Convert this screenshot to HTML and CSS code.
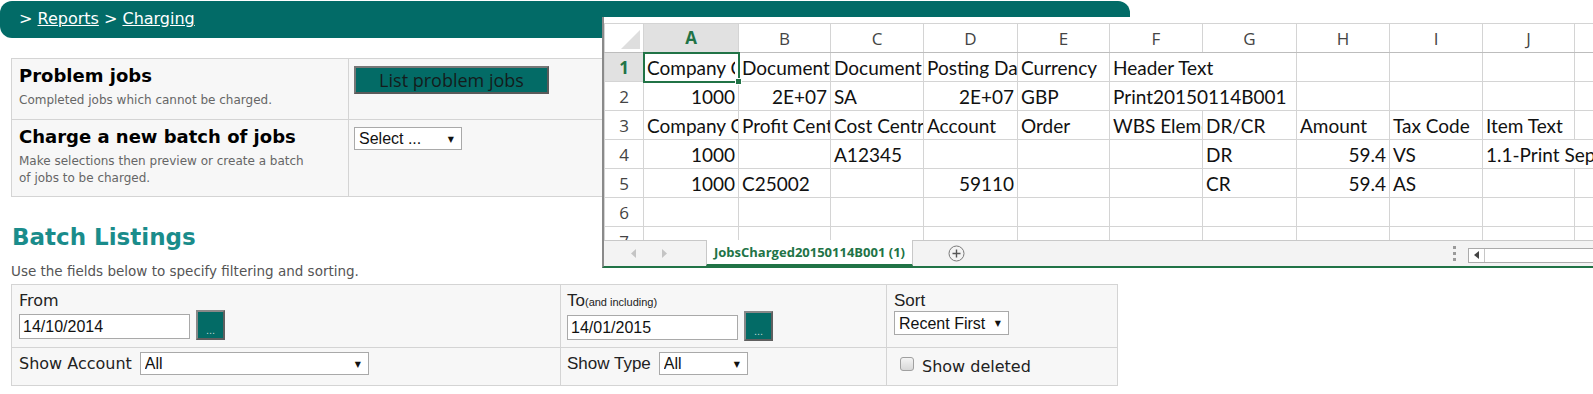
FILE: index.html
```html
<!DOCTYPE html>
<html lang="en">
<head>
    <meta charset="UTF-8">
    <meta name="viewport" content="width=device-width, initial-scale=1.0">
    <title>Reports - Charging</title>
    <link rel="stylesheet" href="styles.css">
</head>
<body>

    <div class="crumbs">&gt; <a href="#">Reports</a> &gt; <a href="#">Charging</a></div>

    <div class="page">
        <table class="actions">
            <tr class="r1">
                <td class="desc">
                    <div class="ttl">Problem jobs</div>
                    <div class="sub">Completed jobs which cannot be charged.</div>
                </td>
                <td class="ctl"><button class="bigbtn">List problem jobs</button></td>
            </tr>
            <tr class="r2">
                <td class="desc">
                    <div class="ttl">Charge a new batch of jobs</div>
                    <div class="sub">Make selections then preview or create a batch<br>of jobs to be charged.</div>
                </td>
                <td class="ctl">
                    <span class="dd"><select class="sel-batch"><option>Select ...</option></select></span>
                </td>
            </tr>
        </table>

        <h2 class="head">Batch Listings</h2>
        <p class="hint">Use the fields below to specify filtering and sorting.</p>

        <table class="filters">
            <tr class="f1">
                <td class="c1">
                    <div class="lbl">From</div>
                    <div class="datebox">
                        <input class="date" type="text" value="14/10/2014">
                        <button class="pick">...</button>
                    </div>
                </td>
                <td class="c2">
                    <div class="lbl arial">To<small>(and including)</small></div>
                    <div class="datebox">
                        <input class="date" type="text" value="14/01/2015">
                        <button class="pick">...</button>
                    </div>
                </td>
                <td class="c3">
                    <div class="lbl arial">Sort</div>
                    <span class="dd"><select class="sel-sort"><option>Recent First</option></select></span>
                </td>
            </tr>
            <tr class="f2">
                <td class="c1">
                    <div class="inline">
                        <span class="lbl">Show Account</span>
                        <span class="dd"><select class="sel-acc"><option>All</option></select></span>
                    </div>
                </td>
                <td class="c2">
                    <div class="inline">
                        <span class="lbl arial">Show Type</span>
                        <span class="dd"><select class="sel-type"><option>All</option></select></span>
                    </div>
                </td>
                <td class="c3">
                    <label class="chk"><input type="checkbox"> <span>Show deleted</span></label>
                </td>
            </tr>
        </table>
    </div>

    <!-- spreadsheet window lying over the page -->
    <div class="xl">
        <div class="xl-top"></div>
        <div class="xl-grid">
            <table class="sheet">
                <colgroup>
                    <col style="width:39px"><col style="width:95px"><col style="width:92px"><col style="width:93px">
                    <col style="width:94px"><col style="width:92px"><col style="width:93px"><col style="width:94px">
                    <col style="width:93px"><col style="width:93px"><col style="width:92px"><col style="width:93px">
                </colgroup>
                <tr class="hdr">
                    <th class="corner"></th><th class="on">A</th><th>B</th><th>C</th><th>D</th><th>E</th>
                    <th>F</th><th>G</th><th>H</th><th>I</th><th>J</th><th></th>
                </tr>
                <tr>
                    <th class="on">1</th>
                    <td class="cur"><span class="clip">Company Code</span><i class="handle"></i></td>
                    <td>Document Date</td><td>Document Type</td><td>Posting Date</td><td>Currency</td>
                    <td colspan="2">Header Text</td><td></td><td></td><td></td><td></td>
                </tr>
                <tr>
                    <th>2</th>
                    <td class="num">1000</td><td class="num">2E+07</td><td>SA</td><td class="num">2E+07</td><td>GBP</td>
                    <td colspan="2">Print20150114B001</td><td></td><td></td><td></td><td></td>
                </tr>
                <tr>
                    <th>3</th>
                    <td>Company Code</td><td>Profit Centre</td><td>Cost Centre</td><td>Account</td><td>Order</td>
                    <td>WBS Element</td><td>DR/CR</td><td>Amount</td><td>Tax Code</td><td>Item Text</td><td></td>
                </tr>
                <tr>
                    <th>4</th>
                    <td class="num">1000</td><td></td><td>A12345</td><td></td><td></td>
                    <td></td><td>DR</td><td class="num">59.4</td><td>VS</td><td colspan="2">1.1-Print September</td>
                </tr>
                <tr>
                    <th>5</th>
                    <td class="num">1000</td><td>C25002</td><td></td><td class="num">59110</td><td></td>
                    <td></td><td>CR</td><td class="num">59.4</td><td>AS</td><td></td><td></td>
                </tr>
                <tr>
                    <th>6</th>
                    <td></td><td></td><td></td><td></td><td></td><td></td><td></td><td></td><td></td><td></td><td></td>
                </tr>
                <tr>
                    <th>7</th>
                    <td></td><td></td><td></td><td></td><td></td><td></td><td></td><td></td><td></td><td></td><td></td>
                </tr>
            </table>
        </div>
        <div class="tabs">
            <div class="tabnav">
                <svg width="6" height="9" viewBox="0 0 6 9"><path d="M5 0 L0 4.5 L5 9 Z" fill="#c4c4c4"/></svg>
                <svg width="6" height="9" viewBox="0 0 6 9"><path d="M1 0 L6 4.5 L1 9 Z" fill="#c4c4c4"/></svg>
            </div>
            <div class="tab">JobsCharged20150114B001 (1)</div>
            <svg class="addsheet" width="17" height="17" viewBox="0 0 17 17">
                <circle cx="8.5" cy="8.5" r="7.5" fill="none" stroke="#7a7a7a" stroke-width="1"/>
                <path d="M8.5 4.5 V12.5 M4.5 8.5 H12.5" stroke="#555" stroke-width="1.4"/>
            </svg>
            <div class="vdots"><i></i><i></i><i></i></div>
            <div class="hscroll">
                <span class="larr"><svg width="5" height="8" viewBox="0 0 5 8"><path d="M5 0 L0 4 L5 8 Z" fill="#444"/></svg></span>
            </div>
        </div>
    </div>

</body>
</html>
```

FILE: styles.css
```css
body {
    margin: 0;
    font-family: "DejaVu Sans", Verdana, sans-serif;
    color: #111;
    position: relative;
    height: 394px;
    overflow: hidden;
}

/* breadcrumb bar */
.crumbs {
    margin-top: 1px;
    width: 1111px;
    height: 37px;
    padding-left: 19px;
    background: #026b67;
    border-radius: 12px;
    color: #fff;
    font-size: 16px;
    line-height: 36px;
}
.crumbs a {
    color: #fff;
}

.page {
    padding-left: 11px;
}

/* top actions table */
.actions {
    width: 1107px;
    margin-top: 20px;
    border-collapse: collapse;
    background: #f7f7f7;
}
.actions td {
    border: 1px solid #d4d4d4;
    vertical-align: top;
}
.r1 { height: 61px; }
.r2 { height: 77px; }
.desc {
    width: 322px;
    padding: 6px 7px 0 7px;
}
.ctl {
    padding: 7px 5px 0 5px;
}
.ttl {
    font-size: 18px;
    font-weight: bold;
    line-height: 22px;
    color: #000;
}
.sub {
    margin-top: 5px;
    font-size: 12px;
    line-height: 16.5px;
    color: #666;
}
.bigbtn {
    width: 195px;
    height: 28px;
    background: #036b66;
    border: 2px solid #5a5a5a;
    border-top-color: #777;
    border-left-color: #777;
    color: #141c1c;
    font-family: "Open Sans", sans-serif;
    font-size: 18px;
    line-height: 22px;
    padding: 0;
}

/* fake native selects */
.dd {
    display: inline-block;
    position: relative;
    vertical-align: middle;
}
.dd::after {
    content: "\25BC";
    position: absolute;
    right: 8px;
    top: 50%;
    transform: translateY(-50%);
    font-size: 8px;
    color: #111;
    pointer-events: none;
}
.dd select {
    -webkit-appearance: none;
    appearance: none;
    background: #fff;
    border: 1px solid #a9a9a9;
    border-radius: 0;
    font-family: "Liberation Sans", Arial, sans-serif;
    font-size: 16px;
    color: #111;
    padding: 0 0 0 4px;
    height: 23px;
    margin: 0;
}
.sel-batch { width: 108px; }
.sel-sort { width: 115px; height: 24px !important; }
.sel-acc { width: 229px; }
.sel-type { width: 89px; }

/* batch listing */
.head {
    margin: 27px 0 0 1px;
    font-size: 23px;
    line-height: 26px;
    color: #1a8c8b;
}
.hint {
    margin: 13px 0 5px 0;
    font-size: 13.5px;
    line-height: 16px;
    color: #555;
}

.filters {
    width: 1107px;
    border-collapse: collapse;
    background: #f7f7f7;
}
.filters td {
    border: 1px solid #d4d4d4;
    vertical-align: top;
    padding: 6px 6px 0 7px;
}
.f1 { height: 63px; }
.f2 { height: 38px; }
.c1 { width: 535px; }
.c2 { width: 313px; padding-left: 6px !important; }
.f2 td {
    padding-top: 4px;
}
.lbl {
    font-size: 16px;
    line-height: 20px;
    color: #222;
}
.arial {
    font-family: "Liberation Sans", Arial, sans-serif;
    font-size: 17px;
}
.lbl small {
    font-size: 11px;
}
.datebox {
    display: flex;
    align-items: flex-end;
    gap: 6px;
    margin-top: -1px;
}
.date {
    width: 171px;
    height: 25px;
    box-sizing: border-box;
    border: 1px solid #a9a9a9;
    font-family: "Liberation Sans", Arial, sans-serif;
    font-size: 16px;
    padding: 0 3px;
    margin: 0 0 1px 0;
    color: #111;
}
.pick {
    width: 29px;
    height: 30px;
    background: #036b66;
    border: 2px solid #5f5f5f;
    border-top-color: #888;
    border-left-color: #888;
    color: #b9d3d2;
    font-size: 11px;
    padding: 10px 0 0 0;
    line-height: 12px;
}
.inline {
    display: flex;
    align-items: center;
    gap: 8px;
}
.c3 .dd {
    margin-top: 0;
}
.chk {
    display: flex;
    align-items: center;
    gap: 8px;
    margin: 5px 0 0 6px;
    font-size: 16px;
    color: #222;
}
.chk input {
    -webkit-appearance: none;
    appearance: none;
    width: 14px;
    height: 14px;
    margin: 0;
    border: 1px solid #a0a0a0;
    border-radius: 3px;
    background: linear-gradient(#f4f4f4, #d8d8d8);
    position: relative;
    top: -3px;
}

/* spreadsheet window */
.xl {
    position: absolute;
    left: 602px;
    top: 17px;
    right: 0;
    height: 249px;
    background: #fff;
    border-left: 2px solid #8a8a8a;
    border-bottom: 2px solid #217346;
    overflow: hidden;
}
.xl-top {
    height: 6px;
}
.xl-grid {
    height: 217px;
    overflow: hidden;
}
.sheet {
    table-layout: fixed;
    width: 1063px;
    border-collapse: collapse;
    font-family: Lato, sans-serif;
    font-size: 19px;
    color: #111;
}
.sheet tr {
    height: 29px;
}
.sheet td {
    border: 1px solid #d4d4d4;
    padding: 0 3px;
    white-space: nowrap;
    overflow: hidden;
}
.sheet td.num {
    text-align: right;
}
.sheet th {
    border: 1px solid #d4d4d4;
    font-family: "Open Sans", sans-serif;
    font-weight: normal;
    font-size: 17px;
    color: #444;
    background: #fff;
    padding: 0;
}
.sheet .hdr th {
    border-bottom-color: #bdbdbd;
}
.sheet th.on {
    background: #e1e1e1;
    color: #217346;
    font-weight: bold;
}
.sheet .hdr th.on {
    border-bottom: 2px solid #217346;
}
.sheet th.corner {
    position: relative;
}
.sheet th.corner::after {
    content: "";
    position: absolute;
    right: 3px;
    bottom: 3px;
    border-style: solid;
    border-width: 0 0 19px 19px;
    border-color: transparent transparent #dedede transparent;
}
.sheet td.cur {
    overflow: visible;
    position: relative;
    outline: 2px solid #217346;
    outline-offset: -1px;
}
.clip {
    display: block;
    overflow: hidden;
}
.handle {
    position: absolute;
    right: -4px;
    bottom: -4px;
    width: 5px;
    height: 5px;
    background: #217346;
    border: 1px solid #fff;
}

/* sheet tabs */
.tabs {
    height: 25px;
    background: #f3f3f3;
    border-top: 1px solid #c8c8c8;
    display: flex;
    align-items: center;
}
.tabnav {
    width: 102px;
    display: flex;
    gap: 24px;
    padding-left: 27px;
    box-sizing: border-box;
}
.tab {
    align-self: stretch;
    width: 207px;
    margin-top: -1px;
    box-sizing: border-box;
    background: #fff;
    border-left: 1px solid #c8c8c8;
    border-right: 1px solid #c8c8c8;
    border-bottom: 2px solid #217346;
    color: #217346;
    font-family: "Open Sans", sans-serif;
    font-weight: bold;
    font-size: 13px;
    text-align: center;
    line-height: 24px;
}
.addsheet {
    margin-left: 35px;
}
.vdots {
    margin-left: auto;
    margin-right: 12px;
    display: flex;
    flex-direction: column;
    gap: 3px;
}
.vdots i {
    width: 3px;
    height: 3px;
    background: #9a9a9a;
}
.hscroll {
    width: 125px;
    height: 15px;
    margin-top: 3px;
    box-sizing: border-box;
    border: 1px solid #ababab;
    border-right: none;
    background: #fff;
    display: flex;
}
.larr {
    width: 15px;
    border-right: 1px solid #c6c6c6;
    display: flex;
    align-items: center;
    justify-content: center;
}
```
